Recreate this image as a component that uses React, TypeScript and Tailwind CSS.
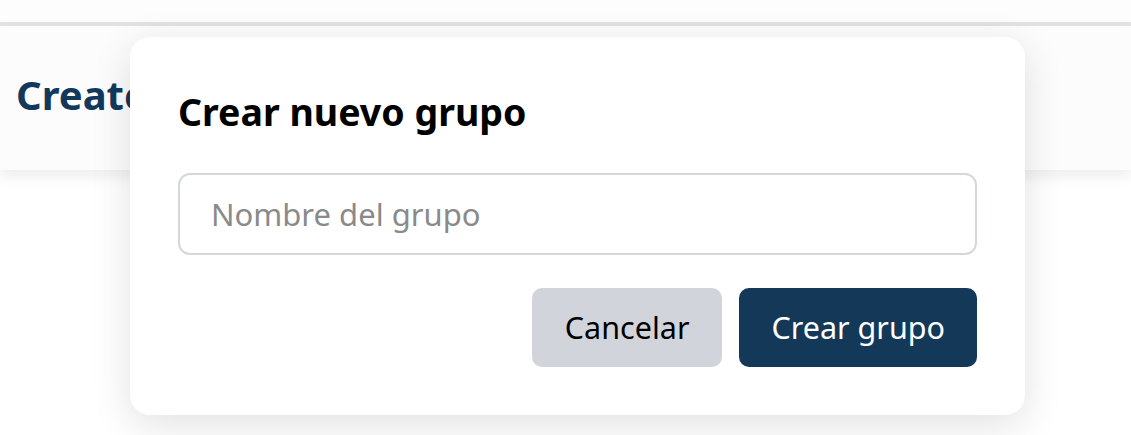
import React from 'react';

const App: React.FC = () => {
    return (
        <div className="relative w-[1131px] h-[435px] overflow-hidden bg-white font-['Noto_Sans',sans-serif]">
            {/* page behind the dialog */}
            <div className="h-[22px] bg-[#fdfdfd]"></div>
            <div className="h-[4px] bg-[#e4e4e4]"></div>
            <header className="h-[144px] bg-[#fcfcfc] shadow-[0_6px_14px_rgba(0,0,0,0.08)] flex items-center px-4">
                <h1 className="text-[40px] font-bold text-[#12395c] -mt-[6px]">Create</h1>
            </header>

            {/* dialog */}
            <div className="absolute left-[130px] top-[37px] w-[895px] bg-white rounded-[20px] p-12 shadow-[0_10px_40px_rgba(0,0,0,0.12)]">
                <h2 className="text-[37.5px] leading-[54px] font-bold text-black mb-[34px]">Crear nuevo grupo</h2>
                <input
                    type="text"
                    placeholder="Nombre del grupo"
                    className="w-full h-[82px] border-2 border-[#d4d7dd] rounded-[12px] pl-[31px] text-[31px] text-black placeholder:text-[#8a8a8a] outline-none"
                />
                <div className="flex justify-end gap-[17px] mt-[33px]">
                    <button className="h-[79px] px-[33px] rounded-[10px] bg-[#d1d5db] text-[30.5px] text-black">Cancelar</button>
                    <button className="h-[79px] px-8 rounded-[10px] bg-[#133858] text-[30.5px] text-white">Crear grupo</button>
                </div>
            </div>
        </div>
    );
};

export default App;
